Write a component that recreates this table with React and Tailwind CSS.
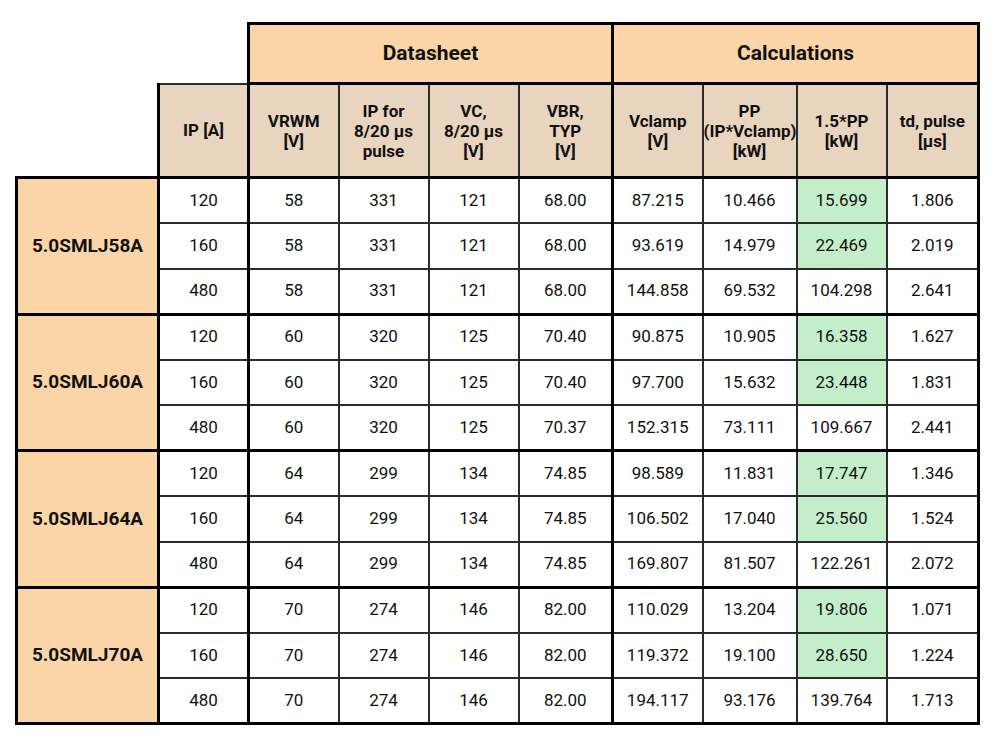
const groups = [
  {
    name: '5.0SMLJ58A',
    rows: [
      ['120', '58', '331', '121', '68.00', '87.215', '10.466', '15.699', '1.806', true],
      ['160', '58', '331', '121', '68.00', '93.619', '14.979', '22.469', '2.019', true],
      ['480', '58', '331', '121', '68.00', '144.858', '69.532', '104.298', '2.641', false],
    ],
  },
  {
    name: '5.0SMLJ60A',
    rows: [
      ['120', '60', '320', '125', '70.40', '90.875', '10.905', '16.358', '1.627', true],
      ['160', '60', '320', '125', '70.40', '97.700', '15.632', '23.448', '1.831', true],
      ['480', '60', '320', '125', '70.37', '152.315', '73.111', '109.667', '2.441', false],
    ],
  },
  {
    name: '5.0SMLJ64A',
    rows: [
      ['120', '64', '299', '134', '74.85', '98.589', '11.831', '17.747', '1.346', true],
      ['160', '64', '299', '134', '74.85', '106.502', '17.040', '25.560', '1.524', true],
      ['480', '64', '299', '134', '74.85', '169.807', '81.507', '122.261', '2.072', false],
    ],
  },
  {
    name: '5.0SMLJ70A',
    rows: [
      ['120', '70', '274', '146', '82.00', '110.029', '13.204', '19.806', '1.071', true],
      ['160', '70', '274', '146', '82.00', '119.372', '19.100', '28.650', '1.224', true],
      ['480', '70', '274', '146', '82.00', '194.117', '93.176', '139.764', '1.713', false],
    ],
  },
];

const headers = [
  ['IP [A]'],
  ['VRWM', '[V]'],
  ['IP for', '8/20 µs', 'pulse'],
  ['VC,', '8/20 µs', '[V]'],
  ['VBR,', 'TYP', '[V]'],
  ['Vclamp', '[V]'],
  ['PP', '(IP*Vclamp)', '[kW]'],
  ['1.5*PP', '[kW]'],
  ['td, pulse', '[µs]'],
];

// columns that start a section get a heavy left edge
const thickLeft = [0, 1, 5];
const thin = 'border-2 border-[#2b2b2b]';

export default function App() {
  return (
    <div className="w-[1000px] h-[750px] bg-white pt-[22px] pl-[15px] text-[#111]" style={{ fontFamily: 'Roboto, "Liberation Sans", sans-serif' }}>
      <table className="table-fixed border-collapse w-[962px]">
        <colgroup>
          <col className="w-[142px]" />
          <col className="w-[90px]" />
          <col className="w-[90px]" />
          <col className="w-[90px]" />
          <col className="w-[90px]" />
          <col className="w-[94px]" />
          <col className="w-[90px]" />
          <col className="w-[94px]" />
          <col className="w-[90px]" />
          <col className="w-[92px]" />
        </colgroup>
        <thead>
          <tr className="h-[60px]">
            <th colSpan={2} className="border-0" />
            <th colSpan={4} className="border-[3px] border-black bg-[#fbd5a7] text-[21px] font-bold">Datasheet</th>
            <th colSpan={4} className="border-[3px] border-black bg-[#fbd5a7] text-[21px] font-bold">Calculations</th>
          </tr>
          <tr className="h-[94px]">
            <th className="border-0" />
            {headers.map((h, i) => (
              <th
                key={i}
                className={`${thin} bg-[#e8d4bf] px-0 text-[17px] leading-[20px] font-bold whitespace-nowrap border-b-[3px] border-b-black ${thickLeft.includes(i) ? 'border-l-[3px] border-l-black' : ''} ${i === 8 ? 'border-r-[3px] border-r-black' : ''}`}
              >
                {h.map((line, j) => (
                  <div key={j}>{line}</div>
                ))}
              </th>
            ))}
          </tr>
        </thead>
        <tbody>
          {groups.map((g) =>
            g.rows.map((r, ri) => (
              <tr key={g.name + ri} className="h-[45.5px]">
                {ri === 0 && (
                  <td rowSpan={3} className="border-[3px] border-black bg-[#fbd5a7] text-center text-[19px] font-bold">
                    {g.name}
                  </td>
                )}
                {r.slice(0, 9).map((v, ci) => (
                  <td
                    key={ci}
                    className={`${thin} text-center text-[17px] ${ci === 7 && r[9] ? 'bg-[#c4eec9]' : ''} ${thickLeft.includes(ci) ? 'border-l-[3px] border-l-black' : ''} ${ci === 8 ? 'border-r-[3px] border-r-black' : ''} ${ri === 2 ? 'border-b-[3px] border-b-black' : ''}`}
                  >
                    {v}
                  </td>
                ))}
              </tr>
            ))
          )}
        </tbody>
      </table>
    </div>
  );
}
